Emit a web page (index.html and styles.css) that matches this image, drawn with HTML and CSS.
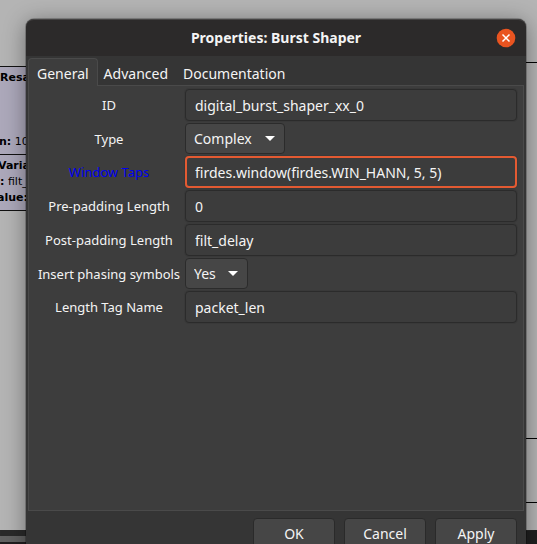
FILE: index.html
```html
<!DOCTYPE html>
<html lang="en">
<head>
<meta charset="utf-8">
<title>Properties: Burst Shaper</title>
<link rel="stylesheet" href="styles.css">
</head>
<body>
<div class="canvas" aria-hidden="true">
  <div class="block block-resampler">
    <p><b>Resa</b></p>
    <p class="value"><b>n:</b> 100</p>
  </div>
  <div class="block block-variable">
    <p class="name"><b>Varia</b></p>
    <p><b>:</b> filt_d</p>
    <p class="val"><b>alue:</b></p>
  </div>
  <span class="wire wire-top"></span>
  <span class="wire wire-middle"></span>
  <span class="wire wire-bottom"></span>
  <div class="scrollbar"></div>
</div>
<main class="dialog">
  <header class="titlebar">
    <h1>Properties: Burst Shaper</h1>
    <button class="close" type="button" aria-label="Close">
      <svg viewBox="0 0 20 20" width="20" height="20"><circle cx="10" cy="10" r="9.3" fill="#e95420"/><path d="M6.500 6.500l7 7M13.500 6.500l-7 7" stroke="#fff" stroke-width="1.5" fill="none"/></svg>
    </button>
  </header>
  <nav class="tabs">
    <button class="tab active" type="button">General</button>
    <button class="tab" type="button">Advanced</button>
    <button class="tab" type="button">Documentation</button>
  </nav>
  <form class="panel" id="props">
    <label for="id">ID</label>
    <input id="id" type="text" value="digital_burst_shaper_xx_0">
    <label for="type">Type</label>
    <div class="combo">
      <select id="type" class="wide"><option>Complex</option></select>
      <svg class="arrow" viewBox="0 0 10 5" width="10" height="5"><path d="M0 0h10L5 5z" fill="#fff"/></svg>
    </div>
    <label for="taps" class="changed">Window Taps</label>
    <input id="taps" class="focused" type="text" value="firdes.window(firdes.WIN_HANN, 5, 5)">
    <label for="pre">Pre-padding Length</label>
    <input id="pre" type="text" value="0">
    <label for="post">Post-padding Length</label>
    <input id="post" type="text" value="filt_delay">
    <label for="phasing">Insert phasing symbols</label>
    <div class="combo">
      <select id="phasing" class="narrow"><option>Yes</option></select>
      <svg class="arrow" viewBox="0 0 10 5" width="10" height="5"><path d="M0 0h10L5 5z" fill="#fff"/></svg>
    </div>
    <label for="tag">Length Tag Name</label>
    <input id="tag" type="text" value="packet_len">
  </form>
  <footer class="actions">
    <button type="button">OK</button>
    <button type="button">Cancel</button>
    <button type="submit" form="props">Apply</button>
  </footer>
</main>
</body>
</html>
```

FILE: styles.css
```css
* { box-sizing: border-box; }

body {
  margin: 0;
  height: 100vh;
  overflow: hidden;
  position: relative;
  padding: 19px 11px 0 26px;
  display: flex;
  background: #b4b4b4;
  color: #f4f4f4;
  font: 14px/20px "Noto Sans", "Open Sans", sans-serif;
}

button, input, select { font: inherit; color: inherit; margin: 0; }

/* Flow graph behind the dialog */
.canvas {
  position: absolute;
  inset: 0;
  overflow: hidden;
  color: #000;
  font: 11px/16px "DejaVu Sans", sans-serif;
  white-space: nowrap;
}
.canvas p { margin: 0; }
.block {
  position: absolute;
  left: -1px;
  width: 120px;
  border: 1px solid #111;
  background: #aca8ba;
}
.block-resampler { top: 66px; height: 89px; padding-top: 3px; }
.block-resampler .value { margin-top: 48px; }
.block-resampler .value { margin-left: -1px; }
.block-variable { top: 154px; height: 57px; padding-top: 3px; }
.block-variable .name { margin-left: -2px; }
.block-variable .val { margin-left: -3px; }
.wire { position: absolute; right: 0; width: 60px; height: 1px; background: #000; }
.wire-top { top: 62px; }
.wire-middle { top: 438px; }
.wire-bottom { top: 502px; }
.scrollbar {
  position: absolute;
  left: 0;
  right: 0;
  bottom: 0;
  height: 14px;
  border-top: 6px solid #2a2a2a;
  border-bottom: 2px solid #201e1f;
  border-right: 60px solid #202020;
  background: #626262;
}

.dialog {
  position: relative;
  flex: 1;
  align-self: flex-start;
  background: #353535;
  border-radius: 8px 8px 0 0;
  box-shadow: 0 0 0 1px rgba(0, 0, 0, .22), 0 3px 22px rgba(0, 0, 0, .4);
}

.titlebar {
  display: grid;
  grid-template-columns: 1fr auto 1fr;
  align-items: center;
  height: 37px;
  padding: 0 10px;
  border-top: 1px solid #454343;
  border-radius: 8px 8px 0 0;
  background: #2c2a2a;
}
.titlebar h1 { grid-column: 2; margin: 0; font-size: 14px; line-height: 20px; font-weight: 700; }
.close {
  justify-self: end;
  display: flex;
  padding: 0;
  border: 0;
  background: none;
}

.tabs { display: flex; padding: 2px 2px 0; }
.tab {
  height: 27px;
  padding: 3px 8px 0;
  border: 1px solid transparent;
  border-bottom: 0;
  background: none;
}
.tab:nth-child(2) { margin: 0 -3px; }
.tab.active {
  position: relative;
  z-index: 1;
  margin-bottom: -1px;
  height: 28px;
  background: #3d3d3d;
  border-color: #4a4a4a;
  border-radius: 4px 4px 0 0;
}

.panel {
  display: grid;
  grid-template-columns: 152px 1fr;
  gap: 2px 0;
  align-content: start;
  align-items: center;
  min-height: 426px;
  margin: 0 2px;
  padding: 3px 6px 3px 4px;
  border: 1px solid #4a4a4a;
  background: #3d3d3d;
}
.panel label { text-align: center; font-size: 13px; line-height: 16px; }
.panel label.changed { color: #0000f0; }
.panel input {
  width: 100%;
  min-width: 0;
  height: 32px;
  padding: 0 9px;
  border: 1px solid #2b2b2b;
  border-radius: 4px;
  outline: 0;
  background: #3c3c3c;
  box-shadow: 0 0 0 1px #393939;
}
.panel input.focused { border: 2px solid #e35a32; padding: 0 8px; }

.combo { display: flex; position: relative; width: max-content; }
.combo select {
  appearance: none;
  height: 31px;
  padding: 0 8px;
  border: 1px solid #2b2b2b;
  border-radius: 4px;
  background: #464646;
}
.combo .wide { width: 100px; }
.combo .narrow { width: 63px; }
.arrow { position: absolute; right: 10px; top: 13px; pointer-events: none; }

.actions { display: flex; justify-content: flex-end; gap: 9px; padding: 7px 9px 8px; }
.actions button {
  width: 82px;
  height: 32px;
  padding: 0;
  border: 1px solid #2a2a2a;
  border-radius: 4px;
  background: #464646;
}
```
